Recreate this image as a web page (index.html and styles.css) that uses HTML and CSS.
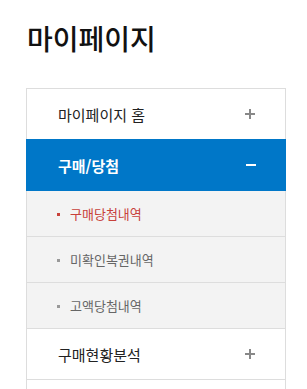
FILE: index.html
```html
<!DOCTYPE html>
<html lang="ko">
<head>
    <meta charset="UTF-8">
    <meta name="viewport" content="width=device-width, initial-scale=1.0">
    <title>마이페이지</title>
    <link rel="stylesheet" href="styles.css">
</head>
<body>
    <div class="side">
        <h2 class="side-title">마이페이지</h2>

        <ul class="lnb">
            <li class="lnb-item">
                <a href="#" class="lnb-head">마이페이지 홈<span class="ico plus"></span></a>
            </li>
            <li class="lnb-item open">
                <a href="#" class="lnb-head">구매/당첨<span class="ico minus"></span></a>
                <ul class="lnb-sub">
                    <li><a href="#" class="active">구매당첨내역</a></li>
                    <li><a href="#">미확인복권내역</a></li>
                    <li><a href="#">고액당첨내역</a></li>
                </ul>
            </li>
            <li class="lnb-item">
                <a href="#" class="lnb-head">구매현황분석<span class="ico plus"></span></a>
            </li>
            <li class="lnb-item lnb-more"></li>
        </ul>
    </div>
</body>
</html>
```

FILE: styles.css
```css
body {
    margin: 0;
    padding: 0;
    background: #fff;
    font-family: "Noto Sans CJK KR", "Noto Sans", sans-serif;
    color: #222;
}

ul {
    list-style: none;
    margin: 0;
    padding: 0;
}

a {
    text-decoration: none;
    color: inherit;
}

.side {
    width: 260px;
    padding: 20px 0 0 26px;
}

.side-title {
    margin: 0 0 31px 1px;
    font-size: 28px;
    font-weight: 500;
    line-height: 37px;
    color: #111;
}

.lnb {
    border: 1px solid #ddd;
    border-bottom: none;
}

.lnb-head {
    position: relative;
    display: flex;
    align-items: center;
    height: 50px;
    padding-left: 31px;
    border-bottom: 1px solid #ddd;
    font-size: 15px;
    color: #222;
}

.open .lnb-head {
    height: 52px;
    margin: -1px -1px 0;
    padding-left: 32px;
    border-bottom: none;
    background: #0077c8;
    color: #fff;
    font-weight: 700;
}

.lnb-more {
    height: 20px;
}

.ico {
    position: absolute;
    right: 30px;
    top: 50%;
    width: 10px;
    height: 10px;
    margin-top: -5px;
}

.ico::before,
.ico::after {
    content: "";
    position: absolute;
    background: #888;
}

.ico::before {
    left: 0;
    top: 4px;
    width: 10px;
    height: 2px;
}

.plus::after {
    left: 4px;
    top: 0;
    width: 2px;
    height: 10px;
}

.minus::before {
    background: #fff;
}

.minus::after {
    display: none;
}

.lnb-sub {
    background: #f3f3f3;
}

.lnb-sub a {
    position: relative;
    display: flex;
    align-items: center;
    height: 45px;
    padding-left: 43px;
    border-bottom: 1px solid #ddd;
    font-size: 13px;
    color: #666;
}

.lnb-sub a::before {
    content: "";
    position: absolute;
    left: 30px;
    top: 50%;
    width: 3px;
    height: 3px;
    margin-top: -1px;
    background: #999;
}

.lnb-sub a.active {
    color: #c8413a;
}

.lnb-sub a.active::before {
    background: #c8413a;
}
```
